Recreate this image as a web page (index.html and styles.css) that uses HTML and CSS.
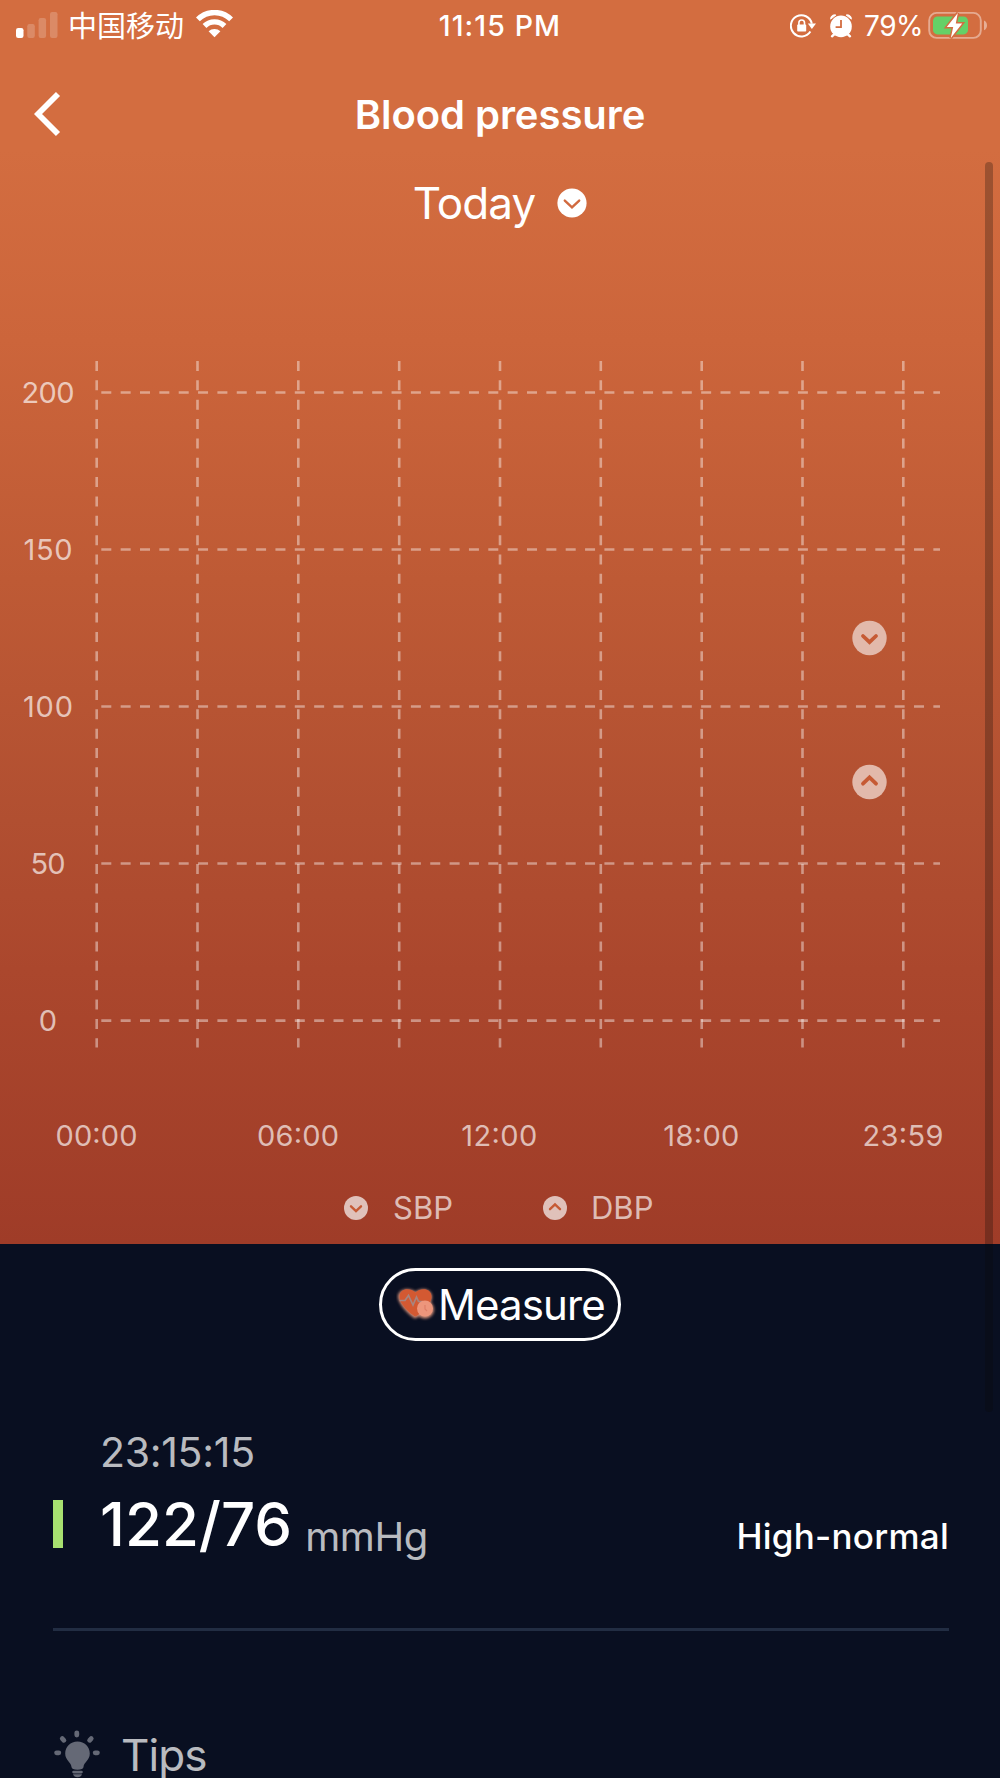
FILE: index.html
```html
<!DOCTYPE html>
<html lang="en">
<head>
  <meta charset="UTF-8" />
  <meta name="viewport" content="width=device-width, initial-scale=1.0"/>
  <title>Blood pressure</title>

  <link rel="stylesheet" href="styles.css">
</head>
<body>
  <div class="screen">
    <div class="top">
      <div class="statusBar">
        <div class="statusLeft">
          <svg class="signal" width="42" height="28" viewBox="0 0 42 28">
            <rect x="0" y="16" width="7.5" height="10" rx="2.2" fill="#fff"/>
            <g fill="#fff" opacity="0.2">
              <rect x="11.3" y="12" width="7.5" height="14" rx="2.2"/>
              <rect x="22.6" y="6" width="7.5" height="20" rx="2.2"/>
              <rect x="34" y="0" width="7.5" height="26" rx="2.2"/>
            </g>
          </svg>
          <span class="carrier">中国移动</span>
          <svg class="wifi" width="37" height="28" viewBox="0 0 37 28">
            <g fill="none" stroke="#fff">
              <path d="M1.9 9.4 A23.5 23.5 0 0 1 35.1 9.4" stroke-width="5.4"/>
              <path d="M8.5 16 A14.2 14.2 0 0 1 28.5 16" stroke-width="5.4"/>
            </g>
            <path d="M18.5 27.3 L12.6 21.3 A8.4 8.4 0 0 1 24.4 21.3 Z" fill="#fff"/>
          </svg>
        </div>
        <div class="clock">11:15 PM</div>
        <div class="statusRight">
          <svg class="lock" width="26" height="24" viewBox="0 0 26 24">
            <path d="M20.4 17.5 A10.6 10.6 0 1 1 21.8 9.6" fill="none" stroke="#fff" stroke-width="2"/>
            <path d="M17.8 9.6 H26 L21.9 15 Z" fill="#fff"/>
            <rect x="7.2" y="10.6" width="9" height="7" rx="0.8" fill="#fff"/>
            <path d="M8.9 11 V8.8 A2.8 2.8 0 0 1 14.5 8.8 V11" fill="none" stroke="#fff" stroke-width="1.6"/>
          </svg>
          <svg class="alarm" width="22" height="24" viewBox="0 0 22 24">
            <g stroke="#fff" stroke-width="2.4" stroke-linecap="round">
              <path d="M5 19.5 L2 22.3"/>
              <path d="M17 19.5 L20 22.3"/>
            </g>
            <path d="M0.6 5.2 A4 4 0 0 1 6 1 Z M21.4 5.2 A4 4 0 0 0 16 1 Z" fill="#fff" stroke="#fff" stroke-width="0.8"/>
            <circle cx="11" cy="12.4" r="10.8" fill="#fff"/>
            <path d="M11 6 V13.2 H5.6" fill="none" stroke="#d36d40" stroke-width="1.8"/>
          </svg>
          <span class="percent">79%</span>
          <svg class="battery" width="60" height="28" viewBox="0 0 60 28">
            <rect x="1.2" y="1.9" width="51.6" height="25" rx="7.5" fill="none" stroke="#fff" stroke-width="1.9" opacity="0.42"/>
            <path d="M56 9.5 Q59 11 59 14.4 Q59 17.6 56 19.2 Z" fill="#fff" opacity="0.45"/>
            <rect x="5" y="5.4" width="35" height="18" rx="4.5" fill="#65d067"/>
            <path d="M29.8 2 L18.8 16 H25.2 L22.8 27 L34.2 12.4 H27.8 Z" fill="#fff" stroke="#d36d40" stroke-width="3" paint-order="stroke"/>
          </svg>
        </div>
      </div>

      <div class="header">
        <svg class="back" width="28" height="46" viewBox="0 0 28 46">
          <path d="M24 3 L4 23 L24 43" fill="none" stroke="#fff" stroke-width="5.8"/>
        </svg>
        <h1>Blood pressure</h1>
      </div>

      <div class="dayPicker">
        <span>Today</span>
        <svg width="30" height="30" viewBox="0 0 30 30">
          <circle cx="15" cy="15" r="14.6" fill="#fff"/>
          <path d="M7.8 12.6 L15 19.4 L22.2 12.6" fill="none" stroke="#d16a3f" stroke-width="2.4" stroke-linecap="round"/>
        </svg>
      </div>

      <svg class="chart" width="1000" height="946" viewBox="0 226 1000 946">
        <g class="gridLines">
          <path d="M96.7 361 V1047.5"/>
          <path d="M197.5 361 V1047.5"/>
          <path d="M298.3 361 V1047.5"/>
          <path d="M399.2 361 V1047.5"/>
          <path d="M500 361 V1047.5"/>
          <path d="M600.8 361 V1047.5"/>
          <path d="M701.7 361 V1047.5"/>
          <path d="M802.5 361 V1047.5"/>
          <path d="M903.3 361 V1047.5"/>
          <path d="M101.3 392.5 H940"/>
          <path d="M101.3 549.5 H940"/>
          <path d="M101.3 706.5 H940"/>
          <path d="M101.3 863.5 H940"/>
          <path d="M101.3 1020.6 H940"/>
        </g>
        <g class="axisText">
          <text x="48" y="403" textLength="53">200</text>
          <text x="48" y="560" textLength="49">150</text>
          <text x="48" y="717" textLength="50">100</text>
          <text x="48" y="874" textLength="35">50</text>
          <text x="48" y="1031">0</text>
          <text x="96.5" y="1146" textLength="82">00:00</text>
          <text x="298" y="1146" textLength="82">06:00</text>
          <text x="499.3" y="1146" textLength="76">12:00</text>
          <text x="701.3" y="1146" textLength="76">18:00</text>
          <text x="903" y="1146" textLength="81">23:59</text>
        </g>
        <g class="marker">
          <circle cx="869.5" cy="638" r="17.2"/>
          <path d="M863 636 L869.5 642.2 L876 636"/>
          <circle cx="869.5" cy="782" r="17.2"/>
          <path d="M863 783.7 L869.5 777.5 L876 783.7"/>
        </g>
      </svg>

      <div class="legend">
        <svg width="24" height="24" viewBox="0 0 24 24">
          <circle cx="12" cy="12" r="12"/>
          <path d="M7 10.3 L12 15 L17 10.3"/>
        </svg>
        <span class="sbp">SBP</span>
        <svg width="24" height="24" viewBox="0 0 24 24">
          <circle cx="12" cy="12" r="12"/>
          <path d="M7 13.2 L12 8.5 L17 13.2"/>
        </svg>
        <span class="dbp">DBP</span>
      </div>
    </div>

    <div class="panel">
      <button class="measure">
        <svg width="42" height="42" viewBox="0 0 42 42">
          <defs>
            <filter id="glow" x="-30%" y="-30%" width="160%" height="160%">
              <feGaussianBlur stdDeviation="1.5"/>
            </filter>
          </defs>
          <g fill="#f0a184" opacity="0.9" filter="url(#glow)">
            <path d="M19 34.5 C13 31 2 20 2 12.5 C2 5 14 3 19.5 8 C25 3 36 5 36 13 C36 22 26 31 19 34.5 Z"/>
            <circle cx="29" cy="25.5" r="9"/>
          </g>
          <path d="M19.5 32.5 C14 30 3.5 20 3.5 13 C3.5 4 14 3.5 19.5 8.5 C25 3.5 35.5 4 35.5 13 C35.5 20 25 30 19.5 32.5 Z" fill="#d35932"/>
          <path d="M3.5 16.5 H9 L12.5 11.5 L17 21 L20.5 13 L22.5 17.5 H27" fill="none" stroke="#a78580" stroke-width="1.7"/>
          <circle cx="29" cy="24.5" r="8" fill="#ed967c"/>
          <path d="M29 21 V25 L31 27" fill="none" stroke="#df7f68" stroke-width="1.2"/>
        </svg>
        <span>Measure</span>
      </button>

      <div class="record">
        <div class="time">23:15:15</div>
        <div class="reading">
          <span class="levelBar"></span>
          <span class="value">122/76</span>
          <span class="unit">mmHg</span>
          <span class="level">High-normal</span>
        </div>
      </div>

      <div class="tips">
        <svg width="46" height="50" viewBox="0 0 46 50">
          <g fill="none" stroke="#656976" stroke-width="4.8" stroke-linecap="round">
            <path d="M22.8 2.8 V5"/>
            <path d="M8.3 8.6 L9.9 10.3"/>
            <path d="M37.2 8.6 L35.6 10.3"/>
            <path d="M2.6 22.8 H4.8"/>
            <path d="M41.2 22.8 H43.4"/>
          </g>
          <g fill="#656976">
            <path d="M23.5 11.5 C16.5 11.5 11.2 16.8 11.2 23.5 C11.2 30.5 17.2 32 17.5 37 Q17.8 39.8 23.5 39.8 Q29.2 39.8 29.5 37 C29.8 32 35.8 30.5 35.8 23.5 C35.8 16.8 30.5 11.5 23.5 11.5 Z"/>
            <rect x="18.2" y="40.7" width="10.6" height="2.8" rx="1.4"/>
            <path d="M19 44.3 H28 Q27 47.2 23.5 47.2 Q20 47.2 19 44.3 Z"/>
          </g>
        </svg>
        <span>Tips</span>
      </div>
    </div>

    <div class="scrollThumb"></div>
  </div>
</body>
</html>
```
FILE: styles.css
```css
:root {
  --panel-bg: #090f21;
  --soft-text: rgba(255, 255, 255, 0.73);
}

* {
  box-sizing: border-box;
}

body {
  margin: 0;
  background: var(--panel-bg);
  color: #fff;
  font-family: Inter, "Noto Sans CJK SC", sans-serif;
}

svg {
  display: block;
  flex-shrink: 0;
}

.screen {
  position: relative;
  width: 1000px;
  height: 1778px;
  overflow: hidden;
}

.top {
  height: 1244px;
  background: linear-gradient(#d36d40 0, #d36d40 150px, #cc653b 340px, #be5a35 580px, #b14f31 820px, #ab472d 970px, #9f3c28 1244px);
}

/* Status bar */
.statusBar {
  display: grid;
  grid-template-columns: 1fr auto 1fr;
  align-items: center;
  height: 50px;
  padding: 0 12px;
  font-size: 28px;
  line-height: 50px;
}

.statusLeft,
.statusRight {
  display: flex;
  align-items: center;
}

.statusRight {
  justify-content: flex-end;
}

.signal {
  margin-left: 4px;
}

.carrier {
  height: 50px;
  margin-left: 10px;
  font-family: "Noto Sans CJK SC", sans-serif;
  font-size: 29px;
  font-weight: 400;
  line-height: 47px;
}

.wifi {
  margin: -3px 0 0 12px;
}

.clock {
  padding-top: 1px;
  font-size: 28.5px;
  font-weight: 500;
  letter-spacing: 1.1px;
}

.alarm {
  margin: 0 12px 0 14px;
}

.percent {
  padding-top: 1px;
  letter-spacing: -0.5px;
}

.battery {
  margin: -2px 0 0 5px;
}

/* Title and day */
.header {
  display: grid;
  grid-template-columns: 70px 1fr 70px;
  align-items: center;
  height: 130px;
}

.back {
  margin-left: 34px;
  margin-top: -3px;
}

h1 {
  margin: 0;
  padding-bottom: 2px;
  font-size: 40px;
  font-weight: 600;
  letter-spacing: -0.05px;
  text-align: center;
}

.dayPicker {
  display: flex;
  align-items: center;
  justify-content: center;
  gap: 22px;
  height: 46px;
  font-size: 44px;
  font-weight: 380;
  letter-spacing: -0.9px;
}

/* Chart */
.gridLines {
  fill: none;
  stroke: #fff;
  stroke-opacity: 0.42;
  stroke-width: 2.6;
  stroke-dasharray: 10 9.35;
}

.axisText {
  fill: rgba(255, 255, 255, 0.66);
  font-size: 29px;
  text-anchor: middle;
}

.marker circle,
.legend circle {
  fill: #e2b9ab;
}

.marker path,
.legend path {
  fill: none;
  stroke: #c65a34;
  stroke-width: 3.8;
  stroke-linecap: round;
}

.legend {
  display: flex;
  align-items: center;
  height: 72px;
  padding-left: 344px;
  color: rgba(255, 255, 255, 0.66);
  font-size: 31px;
  font-weight: 380;
  line-height: 36px;
}

.legend circle {
  fill: #e0c1ba;
}

.legend path {
  stroke-width: 2.4;
}

.sbp {
  width: 150px;
  margin-left: 25px;
}

.dbp {
  margin-left: 24px;
}

/* Lower panel */
.panel {
  padding: 24px 51px 0 53px;
}

.measure {
  display: flex;
  align-items: center;
  width: 242px;
  height: 73px;
  margin: 0 auto 0 326px;
  padding: 0 0 0 14px;
  border: 3px solid #fff;
  border-radius: 37px;
  background: none;
  color: #fff;
  font: 400 42px Inter, sans-serif;
  letter-spacing: -0.9px;
}

.record {
  height: 290px;
  padding-top: 85px;
  border-bottom: 3px solid #222d43;
}

.time {
  margin-left: 47px;
  color: var(--soft-text);
  font-size: 41px;
  letter-spacing: -0.3px;
  line-height: 52px;
}

.reading {
  display: flex;
  align-items: center;
  height: 92px;
}

.levelBar {
  width: 10px;
  height: 48px;
  background: #a8e070;
}

.value {
  margin-left: 37px;
  font-size: 60px;
  font-weight: 500;
}

.unit {
  margin-left: 13px;
  padding-top: 25px;
  color: var(--soft-text);
  font-size: 40px;
  font-weight: 380;
  letter-spacing: -0.4px;
}

.level {
  margin-left: auto;
  padding-top: 24px;
  font-size: 35px;
  font-weight: 500;
  letter-spacing: 0.25px;
}

.tips {
  display: flex;
  align-items: center;
  margin-top: 99px;
  padding-left: 1px;
  color: var(--soft-text);
  font-size: 44px;
  letter-spacing: -0.9px;
  line-height: 50px;
}

.tips span {
  margin-left: 21px;
}

/* Scroll indicator over the page */
.scrollThumb {
  position: absolute;
  top: 162px;
  right: 7px;
  width: 8px;
  height: 1250px;
  border-radius: 4px;
  background: rgba(12, 10, 8, 0.27);
}
```
